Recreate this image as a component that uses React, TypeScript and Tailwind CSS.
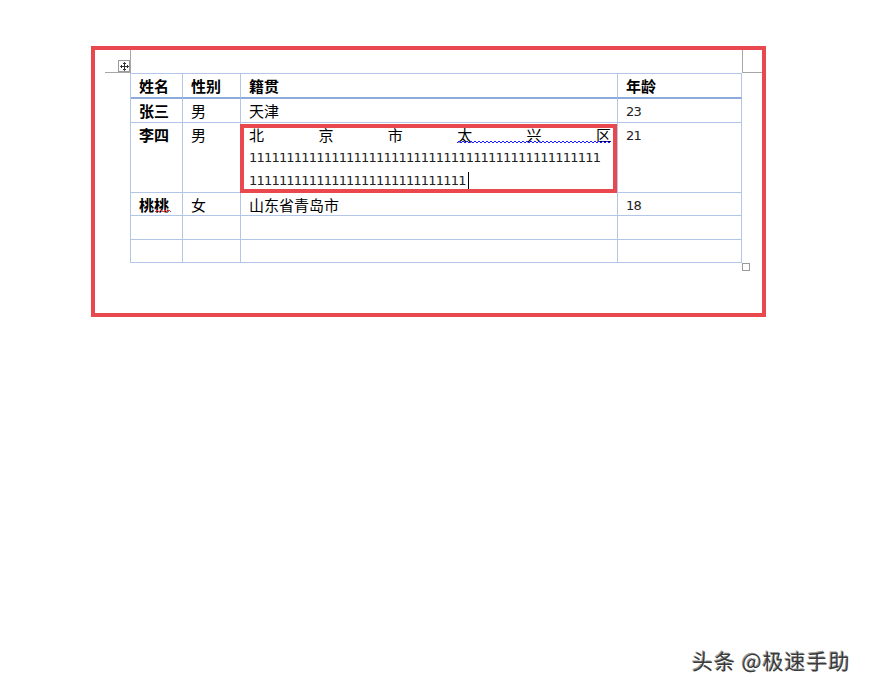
import React from 'react';

const line1 = '1'.repeat(47);
const line2 = '1'.repeat(29);

function Squiggle({ width, color }: { width: number; color: string }) {
  // small spell-check wave, 4px period
  const pts: string[] = [];
  for (let x = 0; x <= width; x += 2) {
    pts.push(`${x},${(x / 2) % 2 === 0 ? 3 : 1}`);
  }
  return (
    <svg width={width} height={4} viewBox={`0 0 ${width} 4`} className="block">
      <polyline points={pts.join(' ')} fill="none" stroke={color} strokeWidth={1} />
    </svg>
  );
}

function MoveHandle() {
  return (
    <div className="w-[12px] h-[12px] border border-[#9a9a9a] bg-white flex items-center justify-center">
      <svg width="9" height="9" viewBox="0 0 9 9" fill="none" stroke="#333" strokeWidth="1">
        <path d="M4.5 0.5v8M0.5 4.5h8" />
        <path d="M3 2l1.5-1.5L6 2M3 7l1.5 1.5L6 7M2 3L0.5 4.5 2 6M7 3l1.5 1.5L7 6" />
      </svg>
    </div>
  );
}

const grid = 'border-r border-b border-[#b4c6e7]';
const cell = `${grid} pl-[8px] leading-[23px] text-[15px] text-black`;
const numCell = `${grid} pl-[8px] pt-[1px] leading-[23px] font-['DejaVu_Sans',sans-serif] text-[13px] tracking-[-0.8px] text-[#222]`;
const head = 'border-r border-b-2 border-r-[#b4c6e7] border-b-[#8eaadb] h-[25px] pl-[8px] leading-[23px] text-[15px] font-bold text-black';
const ones = "font-['DejaVu_Sans',sans-serif] text-[13px] tracking-[-0.8px] text-[#222] pl-[8px] whitespace-nowrap leading-[23px]";

export default function App() {
  return (
    <div className="relative w-[872px] h-[691px] bg-white overflow-hidden font-['Noto_Sans_CJK_SC',sans-serif]">
      <div className="ml-[91px] mt-[46px] w-[675px] h-[271px] border-4 border-[#e9494e]">
        {/* margin crop marks */}
        <div className="flex justify-between h-[23px]">
          <div className="ml-[10px] w-[26px] h-[23px] border-b border-r border-[#a6a6a6] flex items-end justify-end">
            <MoveHandle />
          </div>
          <div className="w-[20px] h-[23px] border-b border-l border-[#a6a6a6]" />
        </div>

        <div className="ml-[35px] w-[612px] grid grid-cols-[52px_58px_377px_124px] border-l border-t border-[#b4c6e7]">
          <div className={head}>姓名</div>
          <div className={head}>性别</div>
          <div className={head}>籍贯</div>
          <div className={head}>年龄</div>

          <div className={`${cell} h-[24px] font-bold`}>张三</div>
          <div className={`${cell} h-[24px]`}>男</div>
          <div className={`${cell} h-[24px]`}>天津</div>
          <div className={`${numCell} h-[24px]`}>23</div>

          <div className={`${cell} h-[70px] font-bold`}>李四</div>
          <div className={`${cell} h-[70px]`}>男</div>
          <div className={`${grid} h-[70px] relative leading-[23px] text-[15px] text-black`}>
            <div className="flex justify-between pl-[8px] pr-[6px]">
              {['北', '京', '市', '太', '兴', '区'].map((c) => (
                <span key={c}>{c}</span>
              ))}
            </div>
            <div className="absolute left-[216px] top-[17px]">
              <Squiggle width={154} color="#1a1aff" />
            </div>
            <div className={ones}>{line1}</div>
            <div className={`${ones} flex items-center`}>
              {line2}
              <span className="inline-block w-[1px] h-[17px] bg-black ml-[2px]" />
            </div>
            <div className="absolute left-[-1px] top-[1px] right-0 bottom-[-1px] border-4 border-[#e9494e]" />
          </div>
          <div className={`${numCell} h-[70px]`}>21</div>

          <div className={`${cell} h-[23px] font-bold relative`}>
            桃桃
            <div className="absolute left-[24px] top-[16px]">
              <Squiggle width={16} color="#e8333a" />
            </div>
          </div>
          <div className={`${cell} h-[23px]`}>女</div>
          <div className={`${cell} h-[23px]`}>山东省青岛市</div>
          <div className={`${numCell} h-[23px]`}>18</div>

          <div className={`${cell} h-[24px]`} />
          <div className={`${cell} h-[24px]`} />
          <div className={`${cell} h-[24px]`} />
          <div className={`${cell} h-[24px]`} />

          <div className={`${cell} h-[23px]`} />
          <div className={`${cell} h-[23px]`} />
          <div className={`${cell} h-[23px]`} />
          <div className={`${cell} h-[23px]`} />
        </div>

        {/* table resize handle */}
        <div className="ml-[647px] w-[8px] h-[8px] border border-[#9a9a9a]" />
      </div>

      <div className="absolute left-[692px] top-[647px] text-[21px] leading-[26px] tracking-[1px] text-[#3a3a3a] [text-shadow:1px_1px_0_#ffffff,-1px_-1px_0_#9a9a9a] whitespace-nowrap">
        头条 @极速手助
      </div>
    </div>
  );
}
